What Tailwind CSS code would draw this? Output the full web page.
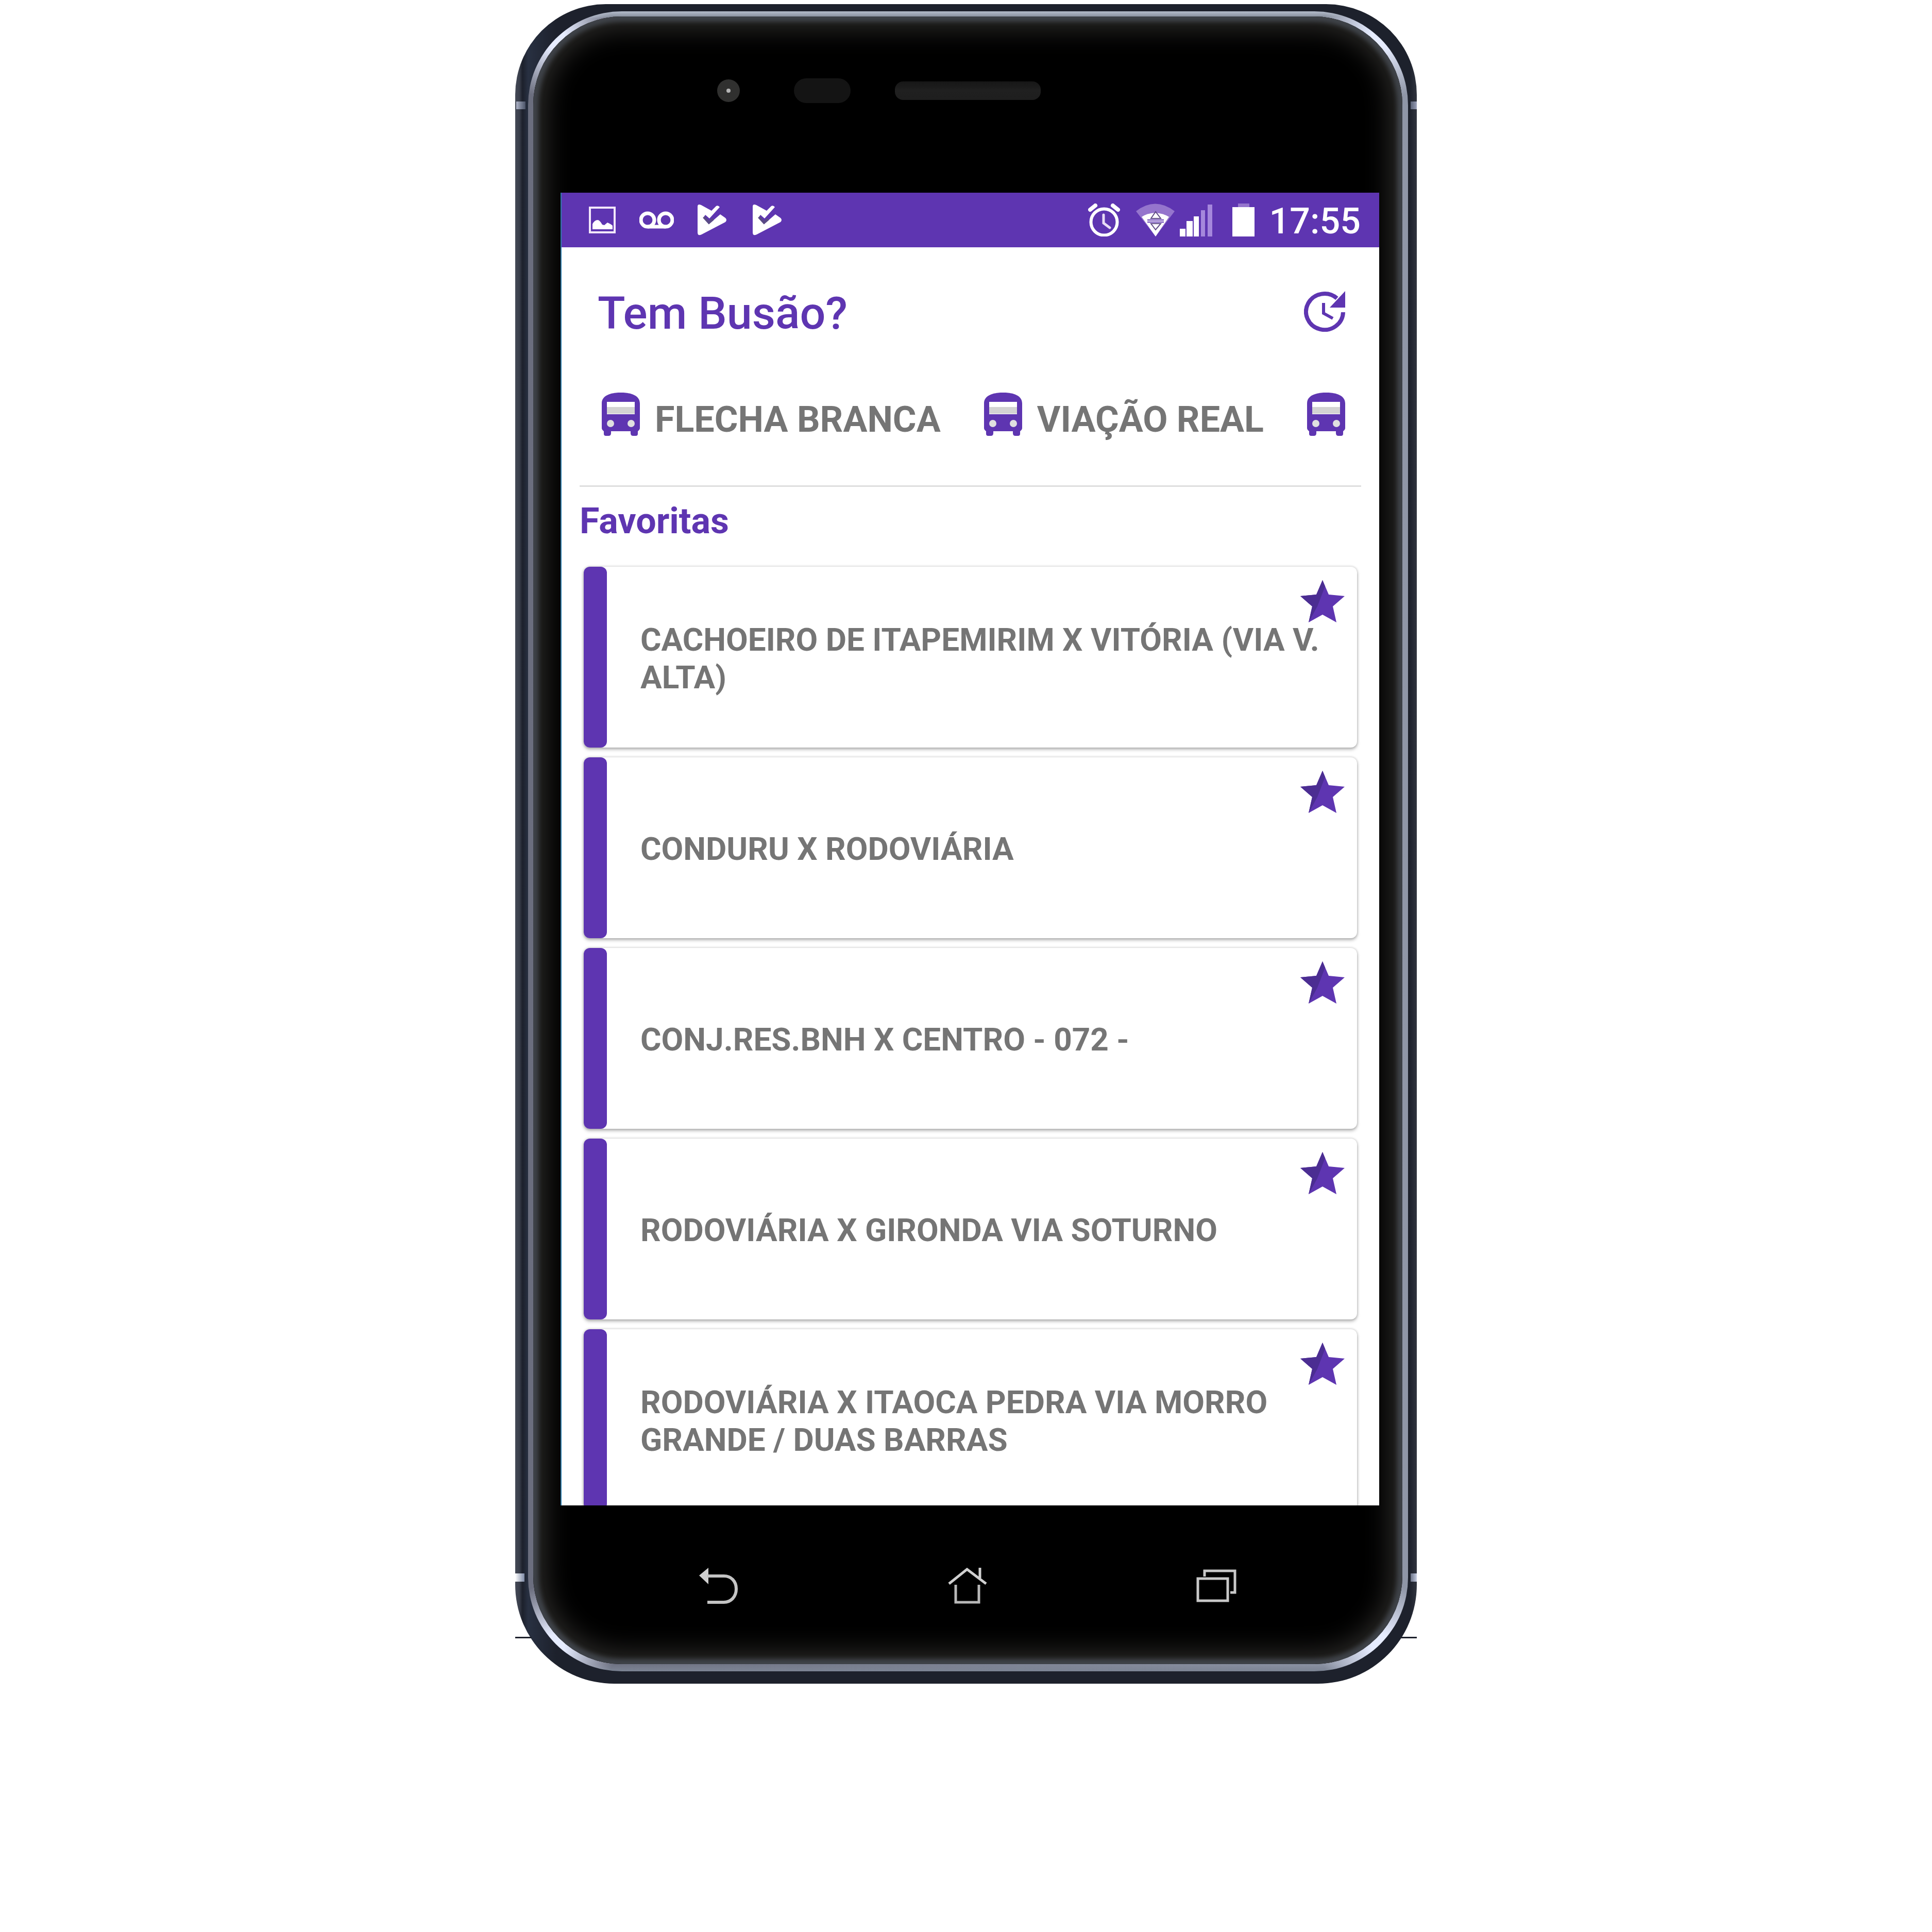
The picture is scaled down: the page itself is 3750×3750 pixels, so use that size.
<!DOCTYPE html>
<html lang="pt-BR">
<head>
<meta charset="utf-8">
<meta name="viewport" content="width=device-width, initial-scale=1">
<title>Tem Busão?</title>
<script src="https://cdn.jsdelivr.net/npm/@tailwindcss/browser@4"></script>
</head>
<body class="min-h-screen bg-white pt-2 font-['Roboto',sans-serif]">

<svg class="hidden" aria-hidden="true">
  <symbol id="bus" viewBox="0 0 74 100">
    <path fill="#5e35b1" d="M0 21C0 6 16 0 37 0s37 6 37 21v48q0 3-4 6v5q0 4-4 4h-5q-5 0-5-5v-4H18v4q0 5-5 5H8q-4 0-4-4v-5q-4-3-4-6z"/>
    <path fill="#fff" d="M10 18h54v24H10z"/>
    <path fill="#d3d3d3" d="M10 28h54v13H10z"/>
    <circle cx="17" cy="60" r="7" fill="#e0e0e0"/><circle cx="57" cy="60" r="7" fill="#e0e0e0"/>
  </symbol>
  <symbol id="star" viewBox="0 0 86 82">
    <path fill="#5e35b1" d="M43 0l12 28 31 3-23 20 7 31-27-15-27 15 7-31L0 31l31-3z"/>
    <path fill="#4b2d92" d="M43 0l5 12-15 39-17 31 7-31L0 31l31-3z"/>
  </symbol>
  <symbol id="play" viewBox="0 0 56 60">
    <path fill="#fff" d="M0 4Q0-2 7 1l20 11 9-9q4-2 7 2L23 27l-8-7-4 6 11 12 22-19 10 7q4 4 0 8L8 58q-8 4-8-4z"/>
    <path fill="none" stroke="#5a4a86" stroke-width="5" d="M12 24l10 11 8-7"/>
  </symbol>
</svg>

<main class="relative mx-auto w-[1750px] max-w-full rounded-t-[176px] rounded-b-[192px] bg-[linear-gradient(to_right,#444956_0,#3a3f4c_8px,#1c202b_14px,#283041_25px,#1d212c_80px,#1d212c_calc(100%-14px),#31353f_100%)] pt-[14px] pr-[17px] pb-6 pl-[25px]">
  <span class="absolute top-[189px] left-[2px] h-[15px] w-[18px] bg-linear-to-r from-[#aeb4c8] to-[#4c5468]"></span>
  <span class="absolute top-[189px] right-0 h-[15px] w-3 bg-linear-to-l from-[#9aa0b8] to-[#5c6478]"></span>
  <span class="absolute bottom-[198px] left-0 h-4 w-[18px] bg-linear-to-r from-white to-[#7f8ba6]"></span>
  <span class="absolute right-0 bottom-[198px] h-4 w-3 bg-linear-to-l from-[#c4cbe0] to-[#6c7488]"></span>
  <span class="absolute bottom-[88px] left-0 h-[3px] w-8 bg-[#1d212c]"></span>
  <span class="absolute right-0 bottom-[88px] h-[3px] w-8 bg-[#1d212c]"></span>

  <div class="rounded-[182px] bg-[radial-gradient(circle_at_50px_50px,#e6ecff_20px,transparent_120px),radial-gradient(circle_at_calc(100%-50px)_50px,#e6ecff_20px,transparent_120px),radial-gradient(circle_at_50px_calc(100%-50px),#e6ecff_20px,transparent_120px),radial-gradient(circle_at_calc(100%-50px)_calc(100%-50px),#e6ecff_20px,transparent_120px),linear-gradient(to_bottom,#b4bccb_0,#8a92a0_10px,transparent_14px,transparent_calc(100%-14px),#7c8494_100%),linear-gradient(to_right,#6b6e7e,#8f96a7)] pt-[10px] pr-[11px] pb-[14px] pl-[10px]">
    <div class="rounded-[172px] bg-black pr-[45px] pl-[53px] shadow-[inset_0_0_8px_10px_#3f4349,inset_0_0_50px_24px_#2c2b29]">

      <div class="flex h-[342px] items-center pb-[54px] pl-[304px]">
        <div class="flex size-11 items-center justify-center rounded-full bg-[#30302f]"><span class="size-2 rounded-full bg-[#b5b5b5]"></span></div>
        <div class="ml-[105px] h-12 w-[110px] rounded-full bg-[#141414]"></div>
        <div class="ml-[86px] h-9 w-[283px] rounded-2xl bg-linear-to-b from-[#161616] via-[#202020] to-[#1e1e1e]"></div>
      </div>

      <section class="h-[2548px] overflow-hidden border-l-2 border-[#2f7cab] bg-white">
        <div class="flex h-[106px] items-center bg-[#5e35b1] pr-9 pl-[53px]">
          <svg class="h-[52px] w-[52px]" viewBox="0 0 52 52"><path fill="none" stroke="#f3e8fb" stroke-width="4" d="M2 2h48v48H2z"/><path fill="#fff" d="M7 44V34q4-8 10-8 4 0 9 9l4 1 6-5q7 3 10 6v7z"/></svg>
          <svg class="ml-[46px] h-[34px] w-[67px]" viewBox="0 0 67 34" fill="none" stroke="#fff" stroke-width="7"><circle cx="16" cy="17" r="13"/><circle cx="51" cy="17" r="13"/><path d="M16 30h35"/></svg>
          <svg class="ml-[46px] h-[60px] w-14"><use href="#play"/></svg>
          <svg class="ml-[51px] h-[60px] w-14"><use href="#play"/></svg>
          <svg class="ml-auto h-16 w-[62px]" viewBox="0 0 62 64" fill="none" stroke="#fff" stroke-width="6" stroke-linecap="round"><circle cx="31" cy="36" r="25.500"/><path d="M4 12l10-8M58 12L48 4" stroke-width="8"/><path d="M30 22v16l12 9" stroke="#e9dcf6" stroke-width="5"/></svg>
          <svg class="ml-[31px] h-16 w-[75px]" viewBox="0 0 75 64"><path fill="#9575cd" d="M0 15Q37-14 75 15L38 64z"/><path fill="#fff" d="M11 26q10-7 26-8 16 1 27 8L38 64z"/><path fill="none" stroke="#5e4a86" stroke-width="2" d="M29 29l9-13 10 13zM29 39h19l-10 12z"/><path stroke="#5e35b1" stroke-width="2" d="M22 32h32M22 36h32"/></svg>
          <svg class="ml-[10px] h-16 w-[63px]" viewBox="0 0 63 64"><path fill="#fff" d="M0 49h11v15H0zM13 34h12v30H13zM27 25h10v39H27z"/><path fill="#a587dc" d="M41 13h8v51h-8zM54 2h9v62h-9z"/></svg>
          <svg class="ml-[39px] h-16 w-[43px]" viewBox="0 0 43 64"><path fill="#9575cd" d="M11 0h22v8H11z"/><path fill="#fff" d="M0 7h43v57H0z"/></svg>
          <time class="ml-7 pt-1 text-[70px] leading-none font-medium text-white">17:55</time>
        </div>

        <header class="flex h-64 items-center justify-between pr-[66px] pl-[70px] text-[#5e35b1]">
          <h1 class="text-[88px] leading-none font-medium">Tem Busão?</h1>
          <button type="button" aria-label="Atualizar horários" class="mb-2">
            <svg class="size-20" viewBox="0 0 80 80"><path fill="none" stroke="#5e35b1" stroke-width="8" d="M76 42A36 35 0 1 1 64 15"/><path fill="#5e35b1" d="M80 1v32H50z"/><path fill="none" stroke="#5e35b1" stroke-width="6" d="M38 24v20l18 10"/></svg>
          </button>
        </header>

        <nav class="mx-[35px] border-b-3 border-[#dedede] pb-[54px]" aria-label="Empresas">
          <div class="flex h-[152px] items-center gap-21 overflow-hidden pl-[43px] text-[70px] leading-none font-bold whitespace-nowrap text-[#757575]">
            <a href="#" class="flex items-center gap-[29px]"><svg class="h-[100px] w-[74px] shrink-0"><use href="#bus"/></svg><span class="pt-1">FLECHA BRANCA</span></a>
            <a href="#" class="flex items-center gap-[29px]"><svg class="h-[100px] w-[74px] shrink-0"><use href="#bus"/></svg><span class="pt-1">VIAÇÃO REAL</span></a>
            <a href="#" aria-label="Próxima empresa"><svg class="h-[100px] w-[74px] shrink-0"><use href="#bus"/></svg></a>
          </div>
        </nav>

        <h2 class="mb-[23px] ml-[35px] text-[70px] leading-[132px] font-bold text-[#5e35b1]">Favoritas</h2>

        <ul class="mr-[43px] ml-[43px] flex flex-col gap-[19px] text-[62px] leading-[73px] font-bold text-[#757575]">
          <li class="relative flex h-[351px] items-center rounded-xl bg-white pr-6 shadow-[0_0_4px_1px_rgba(0,0,0,0.16),0_4px_6px_rgba(0,0,0,0.25)]">
            <span class="h-full w-[45px] shrink-0 rounded-xl bg-[#5e35b1]"></span>
            <a href="#" class="pt-1 pl-[65px]">CACHOEIRO DE ITAPEMIRIM X VITÓRIA (VIA V. ALTA)</a>
            <button type="button" aria-label="Remover dos favoritos" class="absolute top-[26px] right-6"><svg class="h-[82px] w-[86px]"><use href="#star"/></svg></button>
          </li>
          <li class="relative flex h-[351px] items-center rounded-xl bg-white pr-6 shadow-[0_0_4px_1px_rgba(0,0,0,0.16),0_4px_6px_rgba(0,0,0,0.25)]">
            <span class="h-full w-[45px] shrink-0 rounded-xl bg-[#5e35b1]"></span>
            <a href="#" class="pt-1 pl-[65px]">CONDURU X RODOVIÁRIA</a>
            <button type="button" aria-label="Remover dos favoritos" class="absolute top-[26px] right-6"><svg class="h-[82px] w-[86px]"><use href="#star"/></svg></button>
          </li>
          <li class="relative flex h-[351px] items-center rounded-xl bg-white pr-6 shadow-[0_0_4px_1px_rgba(0,0,0,0.16),0_4px_6px_rgba(0,0,0,0.25)]">
            <span class="h-full w-[45px] shrink-0 rounded-xl bg-[#5e35b1]"></span>
            <a href="#" class="pt-1 pl-[65px]">CONJ.RES.BNH X CENTRO - 072 -</a>
            <button type="button" aria-label="Remover dos favoritos" class="absolute top-[26px] right-6"><svg class="h-[82px] w-[86px]"><use href="#star"/></svg></button>
          </li>
          <li class="relative flex h-[351px] items-center rounded-xl bg-white pr-6 shadow-[0_0_4px_1px_rgba(0,0,0,0.16),0_4px_6px_rgba(0,0,0,0.25)]">
            <span class="h-full w-[45px] shrink-0 rounded-xl bg-[#5e35b1]"></span>
            <a href="#" class="pt-1 pl-[65px]">RODOVIÁRIA X GIRONDA VIA SOTURNO</a>
            <button type="button" aria-label="Remover dos favoritos" class="absolute top-[26px] right-6"><svg class="h-[82px] w-[86px]"><use href="#star"/></svg></button>
          </li>
          <li class="relative flex h-[351px] items-center rounded-xl bg-white pr-6 shadow-[0_0_4px_1px_rgba(0,0,0,0.16),0_4px_6px_rgba(0,0,0,0.25)]">
            <span class="h-full w-[45px] shrink-0 rounded-xl bg-[#5e35b1]"></span>
            <a href="#" class="pt-1 pl-[65px]">RODOVIÁRIA X ITAOCA PEDRA VIA MORRO GRANDE / DUAS BARRAS</a>
            <button type="button" aria-label="Remover dos favoritos" class="absolute top-[26px] right-6"><svg class="h-[82px] w-[86px]"><use href="#star"/></svg></button>
          </li>
        </ul>
      </section>

      <div class="grid h-[308px] grid-cols-3 items-center justify-items-center pt-1 pr-[75px] pl-[65px]">
        <button type="button" aria-label="Voltar"><svg class="h-[70px] w-[75px]" viewBox="0 0 75 70"><path fill="#d0d0d0" d="M0 15L18 0v32z"/><path fill="none" stroke="#c4c4c4" stroke-width="6" d="M16 16h32c14 0 24 10 24 25S62 67 48 67H16"/></svg></button>
        <button type="button" aria-label="Início"><svg class="h-[70px] w-[76px]" viewBox="0 0 76 70" fill="none" stroke="#d0d0d0" stroke-width="5"><path d="M2 31L37 3l37 28M62 0v20"/><path d="M15 33v34h45V33" stroke="#b8b8b8"/></svg></button>
        <button type="button" aria-label="Recentes"><svg class="h-[66px] w-[78px]" viewBox="0 0 78 66" fill="none" stroke="#c8c8c8" stroke-width="5"><path d="M3 19h58v43H3z"/><path d="M16 15V4h59v42h-9"/></svg></button>
      </div>
    </div>
  </div>
</main>
</body>
</html>
